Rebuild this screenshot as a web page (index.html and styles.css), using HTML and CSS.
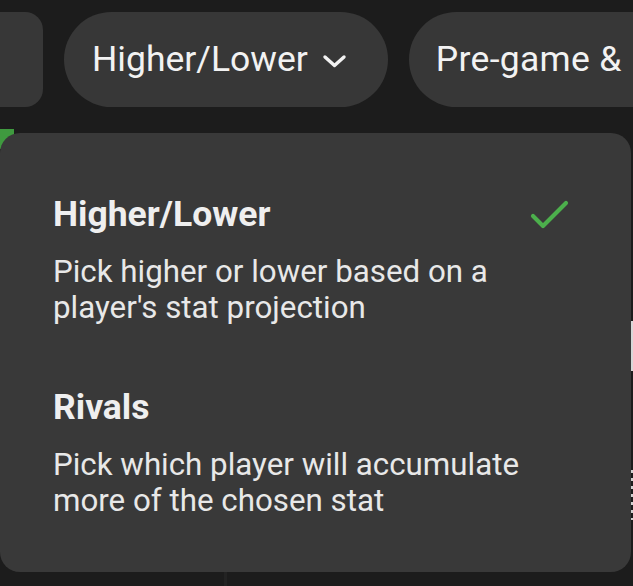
FILE: index.html
```html
<!DOCTYPE html>
<html lang="en">
<head>
<meta charset="utf-8">
<title>Game mode menu</title>
<link rel="stylesheet" href="styles.css">
</head>
<body>
  <div class="tabs">
    <div class="pill pill-cut"></div>
    <div class="pill pill-active">
      <span class="pill-label">Higher/Lower</span>
      <svg class="chevron" width="25" height="14" viewBox="0 0 25 14" aria-hidden="true">
        <path d="M3 3 L12.5 11.5 L22 3" fill="none" stroke="#f2f2f2" stroke-width="3.4" stroke-linecap="round" stroke-linejoin="round"/>
      </svg>
    </div>
    <div class="pill pill-next">
      <span class="pill-label">Pre-game &amp;</span>
    </div>
  </div>

  <div class="stage">
    <div class="under-green"></div>
    <div class="under-divider"></div>
    <div class="under-edge under-edge-a"></div>
    <div class="under-edge under-edge-b"></div>
    <div class="menu">
      <div class="option">
        <div class="option-head">
          <span class="option-title">Higher/Lower</span>
          <svg class="check" width="40" height="30" viewBox="0 0 40 30" aria-hidden="true">
            <path d="M3 16 L13 26 L36 3" fill="none" stroke="#4caf4c" stroke-width="4.2" stroke-linecap="round" stroke-linejoin="round"/>
          </svg>
        </div>
        <p class="option-desc">Pick higher or lower based on a player's stat projection</p>
      </div>
      <div class="option">
        <div class="option-head">
          <span class="option-title">Rivals</span>
        </div>
        <p class="option-desc">Pick which player will accumulate more of the chosen stat</p>
      </div>
    </div>
  </div>
</body>
</html>
```

FILE: styles.css
```css
* {
  box-sizing: border-box;
}

html, body {
  margin: 0;
  padding: 0;
  background: #1c1c1c;
  width: 633px;
  height: 586px;
  overflow: hidden;
  font-family: "Roboto", "Liberation Sans", sans-serif;
  color: #ededed;
}

.tabs {
  display: flex;
  align-items: center;
  gap: 21px;
  padding-top: 12px;
  height: 107px;
  white-space: nowrap;
}

.pill {
  flex: 0 0 auto;
  height: 95px;
  background: #373737;
  display: flex;
  align-items: center;
}

.pill-cut {
  width: 83px;
  margin-left: -40px;
  border-radius: 18px;
}

.pill-active {
  border-radius: 48px;
  padding: 0 41px 0 28px;
  gap: 14px;
}

.pill-next {
  border-radius: 48px;
  padding: 0 60px 0 27px;
}

.pill-label {
  font-size: 35.5px;
  line-height: 1;
  color: #f2f2f2;
}

.pill-next .pill-label {
  letter-spacing: 0.3px;
}

.chevron {
  display: block;
  margin-top: 2px;
}

.stage {
  position: relative;
  padding-top: 26px;
}

.under-green {
  position: absolute;
  left: 0;
  top: 22px;
  width: 14px;
  height: 20px;
  background: #3f9a3f;
}

.under-divider {
  position: absolute;
  left: 224px;
  top: 420px;
  width: 3px;
  height: 60px;
  background: #232323;
}

.under-edge {
  position: absolute;
  right: 0;
  width: 2px;
  background: #d8d8d8;
}

.under-edge-a {
  top: 214px;
  height: 50px;
}

.under-edge-b {
  top: 363px;
  height: 50px;
  background: repeating-linear-gradient(#d0d0d0 0 3px, #1c1c1c 3px 8px);
}

.menu {
  position: relative;
  width: 631px;
  height: 439px;
  background: #393939;
  border-radius: 20px;
  padding: 60px 61px 0 53px;
  display: flex;
  flex-direction: column;
  gap: 60px;
}

.option-head {
  display: flex;
  justify-content: space-between;
  align-items: center;
  height: 42px;
}

.option-title {
  font-size: 35.5px;
  font-weight: 700;
  line-height: 42px;
  color: #efefef;
}

.check {
  display: block;
  margin-right: 0;
  margin-top: 2px;
}

.option-desc {
  margin: 19px 0 0;
  max-width: 500px;
  font-size: 31.3px;
  line-height: 36px;
  color: #e8e8e8;
}
```
